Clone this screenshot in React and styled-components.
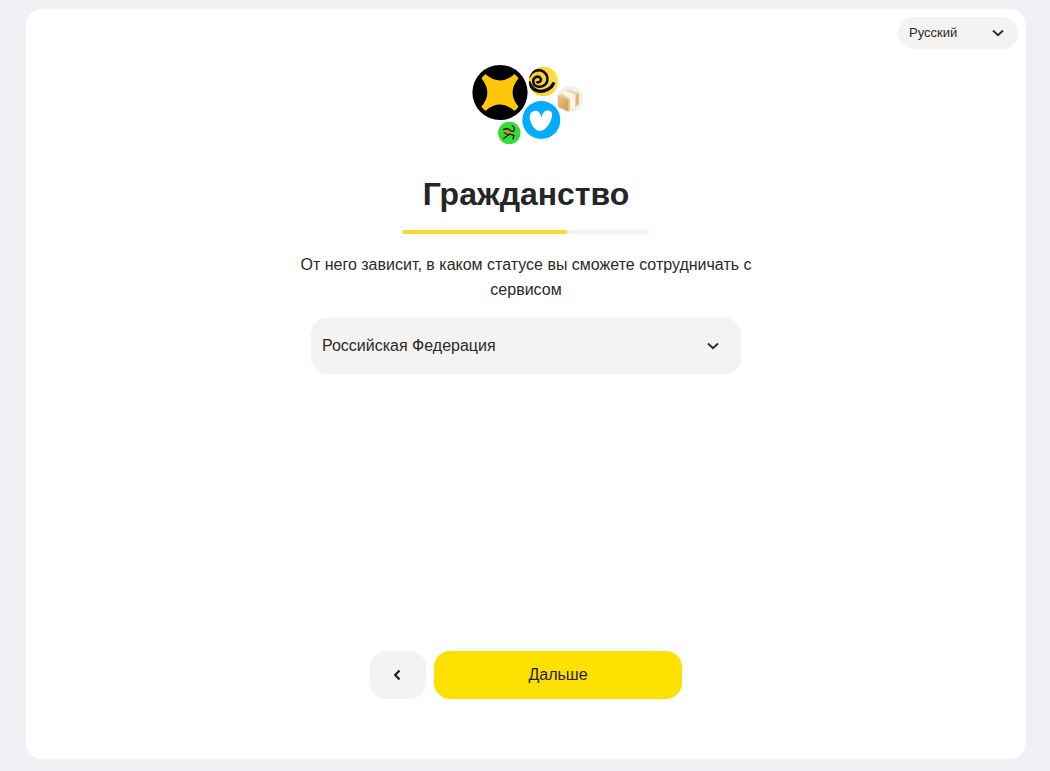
import React, { useState } from "react";
import styled, { createGlobalStyle } from "styled-components";

const GlobalStyle = createGlobalStyle`
  *, *::before, *::after {
    box-sizing: border-box;
  }

  body {
    margin: 0;
    background: #f0f1f5;
    color: #2b2a29;
    font-family: "Liberation Sans", Arial, sans-serif;
  }

  button, select {
    font: inherit;
    color: inherit;
  }
`;

const Page = styled.div`
  display: flex;
  justify-content: center;
  min-height: 100vh;
  padding: 9px 24px 12px 26px;
`;

const Card = styled.div`
  display: flex;
  flex-direction: column;
  width: 100%;
  max-width: 1000px;
  padding: 8px 8px 60px;
  border-radius: 16px;
  background: #fff;
`;

const Header = styled.header`
  display: flex;
  justify-content: flex-end;
`;

const Main = styled.main`
  display: flex;
  flex-direction: column;
  align-items: center;
  padding-top: 15px;
`;

const Title = styled.h1`
  margin: 28px 0 16px;
  color: #262626;
  font-size: 32px;
  line-height: 40px;
`;

const Track = styled.div`
  width: 100%;
  max-width: 248px;
  height: 4px;
  border-radius: 2px;
  background: #f4f3f1;
`;

const Bar = styled.div`
  height: 100%;
  border-radius: 2px;
  background: #fcd830;
`;

const Description = styled.p`
  max-width: 472px;
  margin: 18px 0 16px;
  font-size: 16px;
  line-height: 25px;
  text-align: center;
`;

const SelectBox = styled.div`
  position: relative;
  width: 100%;
  max-width: ${({ $small }) => ($small ? "120px" : "430px")};

  svg {
    position: absolute;
    top: 50%;
    right: ${({ $small }) => ($small ? "14px" : "22px")};
    transform: translateY(-50%);
    pointer-events: none;
  }
`;

const NativeSelect = styled.select`
  display: block;
  width: 100%;
  height: ${({ $small }) => ($small ? "32px" : "56px")};
  padding: 0 32px 2px 11px;
  border: none;
  border-radius: 16px;
  background: #f4f3f1;
  font-size: ${({ $small }) => ($small ? "13px" : "16px")};
  appearance: none;
  cursor: pointer;
`;

const Footer = styled.footer`
  display: flex;
  justify-content: center;
  gap: 8px;
  margin-top: auto;
`;

const Button = styled.button`
  display: flex;
  align-items: center;
  justify-content: center;
  width: ${({ $primary }) => ($primary ? "248px" : "56px")};
  height: 48px;
  padding: 0;
  border: none;
  border-radius: 16px;
  background: ${({ $primary }) => ($primary ? "#fce000" : "#f4f3f1")};
  color: #21201f;
  font-size: 16px;
  cursor: pointer;
`;

const ChevronDown = () => (
  <svg width="12" height="8" viewBox="0 0 12 8" fill="none" aria-hidden="true">
    <path d="M1 1.5 6 6.2 11 1.5" stroke="currentColor" strokeWidth="1.9" />
  </svg>
);

const ChevronLeft = () => (
  <svg width="10" height="12" viewBox="0 0 10 12" fill="none" aria-hidden="true">
    <path d="M6.5 1.5 2.2 6l4.3 4.5" stroke="currentColor" strokeWidth="2.2" />
  </svg>
);

const Logo = () => (
  <svg width="114" height="82" viewBox="-2 0 114 82" fill="none" aria-hidden="true">
    <defs>
      <linearGradient id="sun" x1="0" y1="0" x2="1" y2="0">
        <stop offset="0" stopColor="#f7c51c" />
        <stop offset="1" stopColor="#ffe14a" />
      </linearGradient>
      <linearGradient id="box" x1="0" y1="0" x2="1" y2="1">
        <stop offset="0" stopColor="#e9c48d" />
        <stop offset="1" stopColor="#d09a50" />
      </linearGradient>
      <clipPath id="disc">
        <circle cx="72.5" cy="17.5" r="14.7" />
      </clipPath>
    </defs>

    {/* pro */}
    <circle cx="29" cy="28.5" r="27.6" fill="#000" />
    <path
      d="M10.7 14.7Q10.4 14 11 13.4L13.6 10.7Q14.2 10 14.9 10.5Q29 22.4 43.1 10.5Q43.8 10 44.4 10.7L47 13.4Q47.6 14 47.2 14.7Q36 28.5 47.2 42.3Q47.6 43 47 43.6L44.4 46.3Q43.8 47 43.1 46.5Q29 34.6 14.9 46.5Q14.2 47 13.6 46.3L11 43.6Q10.4 43 10.7 42.3Q22 28.5 10.7 14.7Z"
      fill="#ffc60a"
    />

    {/* spiral */}
    <circle cx="72.5" cy="17.5" r="14.7" fill="url(#sun)" />
    <g clipPath="url(#disc)" stroke="#0a0a05">
      <path
        d="M66.4 18.2C69.6 18.8 71 15.6 69 13.6C66.4 11.4 62.4 13.4 62.2 17.2C62 21.8 67.6 24.2 72.2 21.8C78 18.8 77.6 11 72.4 7.6C67 4.6 60.8 7.2 58 12.6"
        strokeWidth="2.5"
        strokeLinecap="round"
      />
      <path d="M57.6 17.6C61 27.2 69.4 29 76 25.8C80 23.8 82 21.8 82.8 18.4" strokeWidth="3.3" />
    </g>

    {/* parcel */}
    <circle cx="99" cy="35" r="13" fill="#f2f0ee" />
    <path d="M86.8 31.2 96.6 25.4 108 29 97.4 35Z" fill="#f0d3a4" />
    <path d="M86.8 31.2 97.4 35V47.4L88 43.4Q86.8 42.8 86.8 41.5Z" fill="url(#box)" />
    <path d="M97.4 35 108 29V40.3L97.4 47.4Z" fill="#e0b87c" />
    <path d="M90.6 29 94.4 26.6 104.4 31V42.6L98.8 46.4V34.4Z" fill="#fff6e7" />

    {/* heart */}
    <circle cx="70.3" cy="56" r="19" fill="#02adff" />
    <path
      d="M70.5 54C69.6 48.6 66.5 46 63 47C58.5 48.4 58 52.8 59.6 57.6C61.3 62.8 64.6 66.6 68 67C73.5 67.6 79 60.6 80.8 53.6C81.9 49 80 46.7 77 46.6C73.5 46.5 71.2 49.2 70.5 54Z"
      fill="#fff"
    />

    {/* ostrich */}
    <circle cx="38.3" cy="69" r="11.2" fill="#38db35" />
    <path d="M33 65.4Q36.6 63.6 41 67.4Q39.8 70.4 36.8 69.6Q34.4 68.6 33 65.4Z" fill="#d98a1e" />
    <path
      d="M32.4 65.6Q36.6 63.2 40.6 67.4Q43.8 67.6 43.3 64.4Q43 62 41.4 61.8M33.4 68.6Q35.6 70.8 38.6 70.2L36 72 32.6 74.6M38.6 70.2 43 71.4 42 74.8"
      stroke="#151a09"
      strokeWidth="1.3"
      strokeLinecap="round"
      strokeLinejoin="round"
    />
  </svg>
);

const Select = ({ label, options, small }) => {
  const [value, setValue] = useState(options[0]);

  return (
    <SelectBox $small={small}>
      <NativeSelect
        $small={small}
        aria-label={label}
        value={value}
        onChange={(e) => setValue(e.target.value)}
      >
        {options.map((option) => (
          <option key={option}>{option}</option>
        ))}
      </NativeSelect>
      <ChevronDown />
    </SelectBox>
  );
};

const App = () => {
  const progress = 2 / 3;

  return (
    <>
      <GlobalStyle />
      <Page>
        <Card>
          <Header>
            <Select small label="Язык" options={["Русский"]} />
          </Header>
          <Main>
            <Logo />
            <Title>Гражданство</Title>
            <Track>
              <Bar style={{ width: `${progress * 100}%` }} />
            </Track>
            <Description>
              От него зависит, в каком статусе вы сможете сотрудничать с сервисом
            </Description>
            <Select label="Гражданство" options={["Российская Федерация"]} />
          </Main>
          <Footer>
            <Button type="button" aria-label="Назад">
              <ChevronLeft />
            </Button>
            <Button type="button" $primary>
              Дальше
            </Button>
          </Footer>
        </Card>
      </Page>
    </>
  );
};

export default App;
